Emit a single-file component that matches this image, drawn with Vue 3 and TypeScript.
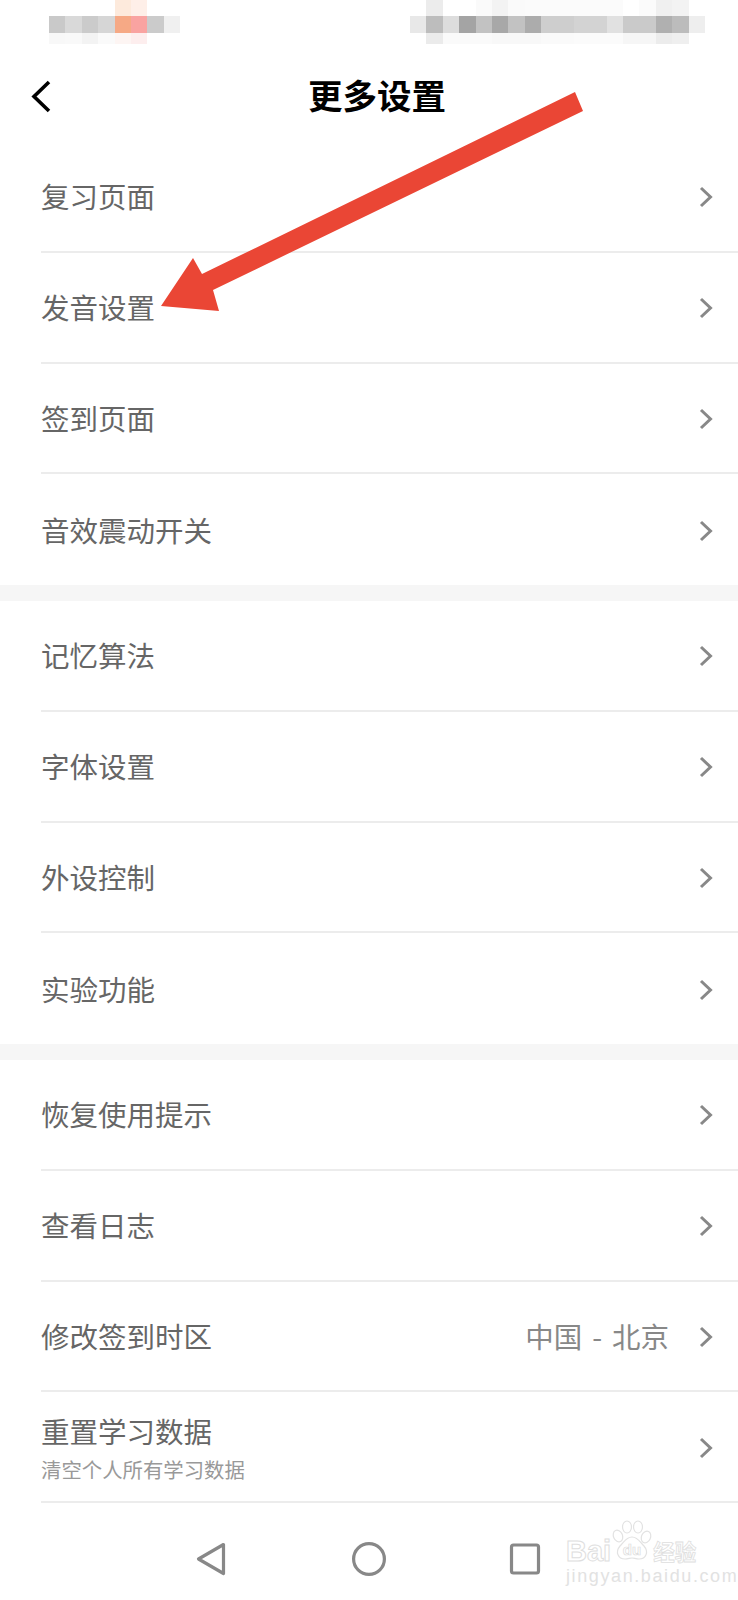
<script setup lang="ts">
interface Row {
  label: string
  sub?: string
  value?: string
}

const sections: Row[][] = [
  [{ label: '复习页面' }, { label: '发音设置' }, { label: '签到页面' }, { label: '音效震动开关' }],
  [{ label: '记忆算法' }, { label: '字体设置' }, { label: '外设控制' }, { label: '实验功能' }],
  [
    { label: '恢复使用提示' },
    { label: '查看日志' },
    { label: '修改签到时区', value: '中国 - 北京' },
    { label: '重置学习数据', sub: '清空个人所有学习数据' },
  ],
]

// status bar was mosaiced out in the original, one colour per cell
const W = '#ffffff'
const leftMosaic: string[] = [
  W, W, W, W, '#fdeadc', '#feefe8', W, W,
  '#c9c9c9', '#d9d9d9', '#cbcbcb', '#d6d6d6', '#f6a985', '#f9a3a1', '#cbcbcb', '#f0f0f0',
  '#f8f8f8', '#f9f9f9', '#f3f3f3', '#fafafa', '#fdf5f3', '#fdeeee', W, W,
]
const rightMosaic: string[] = [
  W, '#ececec', W, W, '#fafafa', '#f3f3f3', '#fafafa', '#fbfbfb', '#fbfbfb', '#fbfbfb', '#fbfbfb', '#fbfbfb', '#fbfbfb', W, '#fbfbfb', '#f0f0f0', '#f3f3f3', W,
  '#e8e8e8', '#bdbdbd', '#dddddd', '#a4a4a4', '#c2c2c2', '#a8a8a8', '#c2c2c2', '#acacac', '#cecece', '#cecece', '#d3d3d3', '#d3d3d3', '#e1e1e1', '#cacaca', '#cacaca', '#b0b0b0', '#bcbcbc', '#eeeeee',
  W, '#ebebeb', '#fafafa', '#fafafa', '#fafafa', '#f8f8f8', '#f8f8f8', '#f8f8f8', '#fafafa', '#fafafa', '#fbfbfb', '#fbfbfb', '#fbfbfb', '#f6f6f6', '#f6f6f6', '#ececec', '#efefef', W,
]
</script>

<template>
  <div class="page">
    <div class="status">
      <div class="mosaic mosaic-left">
        <i v-for="(c, i) in leftMosaic" :key="i" :style="{ background: c }"></i>
      </div>
      <div class="mosaic mosaic-right">
        <i v-for="(c, i) in rightMosaic" :key="i" :style="{ background: c }"></i>
      </div>
    </div>

    <header class="bar">
      <svg class="back" width="20" height="33" viewBox="0 0 20 33">
        <path d="M18 2 3 16.5 18 31" fill="none" stroke="#000" stroke-width="3.6" />
      </svg>
      <h1 class="title">更多设置</h1>
    </header>

    <section v-for="(rows, s) in sections" :key="s" class="group">
      <div v-for="row in rows" :key="row.label" class="row">
        <div class="text">
          <div class="label">{{ row.label }}</div>
          <div v-if="row.sub" class="sub">{{ row.sub }}</div>
        </div>
        <span v-if="row.value" class="value">{{ row.value }}</span>
        <svg class="chev" width="14" height="22" viewBox="0 0 14 22">
          <path d="M2 2 11.5 11 2 20" fill="none" stroke="#888" stroke-width="3" />
        </svg>
      </div>
    </section>

    <nav class="nav">
      <svg width="30" height="36" viewBox="0 0 30 36">
        <path d="M27.5 3.5 2.5 18 27.5 32.5Z" fill="none" stroke="#888" stroke-width="3.2" stroke-linejoin="round" />
      </svg>
      <svg width="36" height="36" viewBox="0 0 36 36">
        <circle cx="18" cy="18" r="15.4" fill="none" stroke="#888" stroke-width="3.2" />
      </svg>
      <svg width="32" height="36" viewBox="0 0 32 36">
        <rect x="2.5" y="4" width="27" height="28" rx="2" fill="none" stroke="#888" stroke-width="3.2" />
      </svg>
    </nav>

    <!-- annotation drawn on top of the screenshot -->
    <svg class="arrow" width="738" height="340" viewBox="0 0 738 340">
      <polygon points="575,92 583,111 213,290 219,311 161,306 193,258 202,274" fill="#ea4635" />
    </svg>

    <div class="watermark">
      <div class="wm-top">
        <span class="wm-bai">Bai</span>
        <svg class="wm-paw" width="42" height="44" viewBox="0 0 42 44">
          <g fill="#fff" stroke="#e2e2e2" stroke-width="1.2">
            <ellipse cx="7" cy="16" rx="4.5" ry="6" transform="rotate(-25 7 16)" />
            <ellipse cx="16" cy="7" rx="4.5" ry="6" />
            <ellipse cx="27" cy="7" rx="4.5" ry="6" />
            <ellipse cx="35" cy="17" rx="4.5" ry="6" transform="rotate(25 35 17)" />
            <path d="M21 17c6 0 8 5 12 9 5 6 2 13-5 13-3 0-5-1-7-1s-4 1-7 1c-7 0-10-7-5-13 4-4 6-9 12-9Z" />
          </g>
          <text x="21" y="35" text-anchor="middle" class="wm-du">du</text>
        </svg>
        <span class="wm-cn">经验</span>
      </div>
      <div class="wm-url">jingyan.baidu.com</div>
    </div>
  </div>
</template>

<style scoped>
.page {
  position: relative;
  width: 738px;
  height: 1600px;
  overflow: hidden;
  background: #fff;
  font-family: "Noto Sans CJK SC", "Liberation Sans", sans-serif;
}
.status {
  display: flex;
  justify-content: space-between;
  height: 54px;
  padding: 0 33px 0 49px;
  box-sizing: border-box;
}
.mosaic {
  display: grid;
  grid-template-rows: 16px 17px 11px;
  filter: blur(0.6px);
}
.mosaic-left {
  grid-template-columns: repeat(8, 16.4px);
}
.mosaic-right {
  grid-template-columns: repeat(18, 16.4px);
}
.bar {
  display: flex;
  align-items: center;
  height: 88px;
  padding: 0 35px 4px 31px;
  box-sizing: border-box;
}
.back {
  flex: none;
}
.title {
  flex: 1;
  margin: -4px 0 0;
  text-align: center;
  font-size: 34.5px;
  line-height: 40px;
  font-weight: 700;
  color: #000;
}
.group + .group {
  border-top: 16px solid #f6f6f6;
}
.row {
  display: flex;
  align-items: center;
  height: 110.75px;
  margin-left: 41px;
  padding-right: 25px;
  box-sizing: border-box;
  border-bottom: 2px solid #ececec;
}
.group:not(:last-of-type) .row:last-child {
  border-bottom: none;
}
.text {
  flex: 1;
}
.label {
  font-size: 28.5px;
  line-height: 38px;
  color: #666;
}
.sub {
  margin-top: 6px;
  font-size: 20.4px;
  line-height: 26px;
  color: #999;
}
.value {
  margin-right: 30px;
  font-size: 28.5px;
  word-spacing: 3.5px;
  color: #888;
}
.chev {
  flex: none;
  margin-top: 2px;
}
.nav {
  display: flex;
  gap: 123px;
  padding: 38px 0 0 196px;
}
.nav svg:nth-child(2) {
  margin: 0 -1px 0 2px;
}
.arrow {
  position: absolute;
  left: 0;
  top: 0;
}
.watermark {
  position: absolute;
  left: 566px;
  top: 1520px;
  width: 140px;
}
.wm-top {
  display: flex;
  align-items: flex-end;
  height: 46px;
}
.wm-bai {
  font-family: "Liberation Sans", sans-serif;
  font-size: 29px;
  line-height: 30px;
  font-weight: 700;
  color: #fff;
  -webkit-text-stroke: 1px #dedede;
}
.wm-paw {
  flex: none;
  margin: 0 0 2px 0;
}
.wm-du {
  font-family: "Liberation Sans", sans-serif;
  font-size: 15px;
  font-weight: 700;
  fill: #fff;
  stroke: #dcdcdc;
  stroke-width: 0.7px;
}
.wm-cn {
  font-size: 21.5px;
  line-height: 30px;
  font-weight: 700;
  color: #fff;
  -webkit-text-stroke: 0.8px #dedede;
}
.wm-url {
  margin-top: 1px;
  font-family: "Liberation Sans", sans-serif;
  font-size: 18px;
  line-height: 18px;
  letter-spacing: 1.6px;
  color: #e2e2e2;
  white-space: nowrap;
}
</style>

<style>
html,
body {
  margin: 0;
  background: #fff;
}
</style>
